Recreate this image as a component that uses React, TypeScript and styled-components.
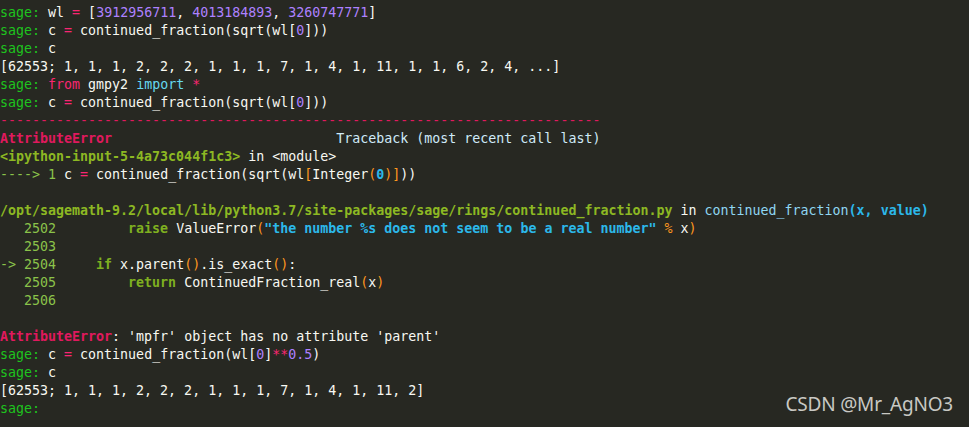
import React from "react";
import styled, { createGlobalStyle, css } from "styled-components";

const Global = createGlobalStyle`
  html, body { margin: 0; padding: 0; background: #272822; }
  body { width: 969px; height: 427px; overflow: hidden; }
`;

type Kind =
  | "plain"
  | "prompt"
  | "op"
  | "num"
  | "err"
  | "loc"
  | "lineno"
  | "paren"
  | "cyanb"
  | "cyan"
  | "kw"
  | "tb"
  | "imp";

const colors: Record<Kind, string> = {
  plain: "#f8f8f2",
  prompt: "#1ec31e",
  op: "#f92672",
  num: "#ae81ff",
  err: "#e0195e",
  loc: "#8db823",
  lineno: "#8bc34a",
  paren: "#fd971f",
  cyanb: "#2cb8ea",
  cyan: "#8fd6f2",
  kw: "#7fb020",
  tb: "#cfeaf8",
  imp: "#66d9ef",
};

const bold: Kind[] = ["err", "loc", "cyanb", "kw"];

const Terminal = styled.div`
  position: relative;
  width: 969px;
  height: 427px;
  box-sizing: border-box;
  padding: 4px 0 0 0;
  background: #272822;
  font-family: "DejaVu Sans Mono", "Liberation Mono", monospace;
  font-size: 13.3px;
  color: #f8f8f2;
`;

const Line = styled.div`
  height: 18px;
  line-height: 18px;
  white-space: pre;
`;

const Tok = styled.span<{ $k: Kind }>`
  color: ${(p) => colors[p.$k]};
  ${(p) =>
    bold.includes(p.$k) &&
    css`
      font-weight: bold;
    `}
`;

const Rule = styled.span`
  color: #e0195e;
`;

const Watermark = styled.div`
  position: absolute;
  right: 16px;
  bottom: 10px;
  font-family: "Noto Sans", "Open Sans", sans-serif;
  font-size: 19px;
  color: #c9c9c4;
  letter-spacing: -0.2px;
`;

type Seg = [Kind, string];
const P: Seg = ["prompt", "sage: "];

const lines: Seg[][] = [
  [P, ["plain", "wl "], ["op", "="], ["plain", " "], ["plain", "["], ["num", "3912956711"], ["plain", ", "], ["num", "4013184893"], ["plain", ", "], ["num", "3260747771"], ["plain", "]"]],
  [P, ["plain", "c "], ["op", "="], ["plain", " continued_fraction(sqrt(wl["], ["num", "0"], ["plain", "]))"]],
  [P, ["plain", "c"]],
  [["plain", "[62553; 1, 1, 1, 2, 2, 2, 1, 1, 1, 7, 1, 4, 1, 11, 1, 1, 6, 2, 4, ...]"]],
  [P, ["op", "from"], ["plain", " gmpy2 "], ["imp", "import"], ["plain", " "], ["op", "*"]],
  [P, ["plain", "c "], ["op", "="], ["plain", " continued_fraction(sqrt(wl["], ["num", "0"], ["plain", "]))"]],
  [],
  [["err", "AttributeError"], ["tb", "                            Traceback (most recent call last)"]],
  [["loc", "<ipython-input-5-4a73c044f1c3>"], ["plain", " in <module>"]],
  [["lineno", "----> 1 "], ["plain", "c "], ["op", "="], ["plain", " continued_fraction(sqrt(wl"], ["paren", "["], ["plain", "Integer"], ["paren", "("], ["cyanb", "0"], ["paren", ")"], ["paren", "]"], ["plain", "))"]],
  [],
  [["loc", "/opt/sagemath-9.2/local/lib/python3.7/site-packages/sage/rings/continued_fraction.py"], ["plain", " in "], ["cyan", "continued_fraction"], ["cyanb", "(x, value)"]],
  [["lineno", "   2502 "], ["plain", "        "], ["kw", "raise"], ["plain", " ValueError"], ["paren", "("], ["cyanb", "\"the number %s does not seem to be a real number\""], ["plain", " "], ["paren", "%"], ["plain", " x"], ["paren", ")"]],
  [["lineno", "   2503 "]],
  [["lineno", "-> 2504 "], ["plain", "    "], ["kw", "if"], ["plain", " x.parent"], ["paren", "()"], ["plain", ".is_exact"], ["paren", "()"], ["plain", ":"]],
  [["lineno", "   2505 "], ["plain", "        "], ["kw", "return"], ["plain", " ContinuedFraction_real"], ["paren", "("], ["plain", "x"], ["paren", ")"]],
  [["lineno", "   2506 "]],
  [],
  [["err", "AttributeError"], ["plain", ": 'mpfr' object has no attribute 'parent'"]],
  [P, ["plain", "c "], ["op", "="], ["plain", " continued_fraction(wl["], ["num", "0"], ["plain", "]"], ["op", "**"], ["num", "0.5"], ["plain", ")"]],
  [P, ["plain", "c"]],
  [["plain", "[62553; 1, 1, 1, 2, 2, 2, 1, 1, 1, 7, 1, 4, 1, 11, 2]"]],
  [["prompt", "sage:"]],
];

export default function App() {
  return (
    <>
      <Global />
      <Terminal>
        {lines.map((segs, i) =>
          i === 6 ? (
            <Line key={i}>
              <Rule>{"-".repeat(75)}</Rule>
            </Line>
          ) : (
            <Line key={i}>
              {segs.length === 0
                ? " "
                : segs.map(([k, t], j) => (
                    <Tok key={j} $k={k}>
                      {t}
                    </Tok>
                  ))}
            </Line>
          )
        )}
        <Watermark>CSDN @Mr_AgNO3</Watermark>
      </Terminal>
    </>
  );
}
